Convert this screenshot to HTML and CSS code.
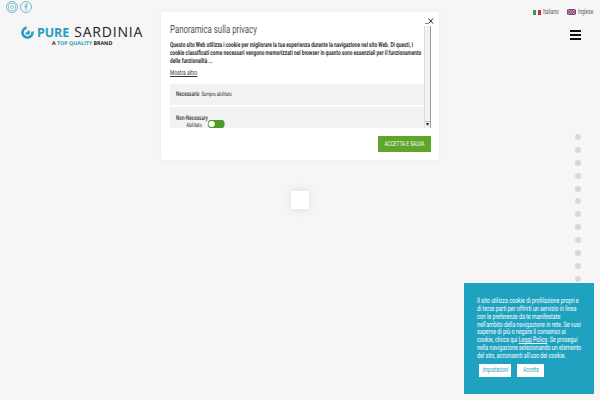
FILE: index.html
```html
<!DOCTYPE html>
<html lang="it">
<head>
  <meta charset="UTF-8">
  <meta name="viewport" content="width=device-width, initial-scale=1.0">
  <title>Pure Sardinia</title>
  <link rel="stylesheet" href="styles.css">
</head>
<body>
  <header class="header">
    <div class="header-left">
      <div class="socials">
        <span class="social">
          <svg width="8" height="8" viewBox="0 0 8 8"><rect x="0.5" y="0.5" width="7" height="7" rx="2" fill="none" stroke="#8fcbd6"/><circle cx="4" cy="4" r="1.5" fill="none" stroke="#8fcbd6"/></svg>
        </span>
        <span class="social">
          <svg width="8" height="8" viewBox="0 0 8 8"><path d="M5.5 0.6H4.6C3.8 0.6 3.4 1.1 3.4 1.9V3H2.5V4.2H3.4V7.6H4.6V4.2H5.5V3H4.6V2.1C4.6 1.9 4.7 1.8 4.9 1.8H5.5Z" fill="#6fbdcb"/></svg>
        </span>
      </div>
      <div class="logo">
        <div class="logo-main">
          <svg class="logo-mark" width="13" height="13" viewBox="0 0 13 13"><path d="M5.6 1.6A5 5 0 1 0 11.4 5.6" fill="none" stroke="#2a9dbd" stroke-width="2.6"/><path d="M6.5 4.2C8 4.2 9 5.1 9 6.4C9 7.8 7.9 8.8 6.5 8.8C5.2 8.8 4.2 7.8 4.2 6.5C6 6.8 7.2 5.8 6.5 4.2Z" fill="#2a9dbd"/></svg>
          <span class="logo-pure">PURE</span>
          <span class="logo-sardinia">SARDINIA</span>
        </div>
        <div class="logo-sub">A <span class="logo-top">TOP QUALITY</span> BRAND</div>
      </div>
    </div>
    <div class="header-right">
      <div class="langs">
        <span class="lang">
          <svg width="8" height="5" viewBox="0 0 8 5"><rect width="3" height="5" fill="#2e9e4f"/><rect x="3" width="2" height="5" fill="#f2f2f2"/><rect x="5" width="3" height="5" fill="#c8303c"/></svg>
          <span class="lang-name">Italiano</span>
        </span>
        <span class="lang">
          <svg width="9" height="6" viewBox="0 0 9 6"><rect width="9" height="6" fill="#3b3f7d"/><path d="M0 0L9 6M9 0L0 6" stroke="#e6c8d2" stroke-width="1"/><path d="M4.5 0V6M0 3H9" stroke="#d9586f" stroke-width="1.6"/></svg>
          <span class="lang-name">Inglese</span>
        </span>
      </div>
      <div class="burger"><span></span><span></span><span></span></div>
    </div>
  </header>

  <div class="dots">
    <span></span><span></span><span></span><span></span><span></span><span></span>
    <span></span><span></span><span></span><span></span><span></span><span></span>
  </div>

  <div class="loader"></div>

  <div class="modal">
    <div class="modal-scroll">
      <div class="modal-clip">
        <div class="modal-body">
          <h2 class="modal-title">Panoramica sulla privacy</h2>
          <p class="modal-text">Questo sito Web utilizza i cookie per migliorare la tua esperienza durante la navigazione nel sito Web. Di questi, i cookie classificati come necessari vengono memorizzati nel browser in quanto sono essenziali per il funzionamento delle funzionalità ...</p>
          <a class="more" href="#">Mostra altro</a>
          <div class="pref">
            <b>Necessario</b> <span>Sempre abilitato</span>
          </div>
          <div class="pref pref-toggle">
            <div class="pref-label">
              <b>Non-Necessary</b>
              <span>Abilitato</span>
            </div>
            <span class="toggle"></span>
          </div>
        </div>
      </div>
      <div class="scrollbar">
        <span class="arrow">▾</span>
      </div>
    </div>
    <svg class="close" width="9" height="9" viewBox="0 0 9 9"><path d="M3.5 1.5L8 6.5M8 1.5L3.5 6.5" stroke="#222" stroke-width="1"/><path d="M0 6.5H3" stroke="#888" stroke-width="1"/></svg>
    <div class="modal-foot">
      <button class="save"><span>ACCETTA E SALVA</span></button>
    </div>
  </div>

  <div class="cookie">
    <p>Il sito utilizza cookie di profilazione propri e di terze parti per offrirti un servizio in linea con le preferenze da te manifestate nell'ambito della navigazione in rete. Se vuoi saperne di più o negare il consenso ai cookie, clicca qui <a href="#">Leggi Policy</a>. Se prosegui nella navigazione selezionando un elemento del sito, acconsenti all'uso dei cookie.</p>
    <div class="cookie-btns">
      <button class="btn-settings"><span>Impostazioni</span></button>
      <button class="btn-accept"><span>Accetta</span></button>
    </div>
  </div>
</body>
</html>
```

FILE: styles.css
```css
* {
  box-sizing: border-box;
}
html, body {
  height: 100%;
}
body {
  margin: 0;
  overflow: hidden;
  background-color: #f6f6f6;
  color: #333;
  font-family: "Roboto", sans-serif;
  text-rendering: geometricPrecision;
}
.header {
  display: flex;
  justify-content: space-between;
  padding: 1px 8px 0 6px;
}
.socials {
  display: flex;
  gap: 2px;
}
.social {
  display: flex;
  align-items: center;
  justify-content: center;
  width: 12px;
  height: 12px;
  border: 1px solid #6fbdcb;
  border-radius: 50%;
}
.logo {
  margin: 12px 0 0 15px;
}
.logo-main {
  display: flex;
  align-items: center;
  gap: 3px;
  height: 14px;
  font-family: "Open Sans", sans-serif;
  font-size: 14px;
  white-space: nowrap;
}
.logo-pure {
  color: #2a9dbd;
  font-size: 12.5px;
  font-weight: 700;
  letter-spacing: -0.1px;
}
.logo-sardinia {
  margin-left: 2px;
  color: #222;
  letter-spacing: 0.8px;
}
.logo-sub {
  margin: 1px 0 0 31px;
  color: #222;
  font-family: "Open Sans", sans-serif;
  font-size: 5.3px;
  font-weight: 700;
  line-height: 7px;
  white-space: nowrap;
}
.logo-top {
  color: #2a9dbd;
}
.header-right {
  display: flex;
  flex-direction: column;
  align-items: flex-end;
}
.langs {
  display: flex;
  gap: 9px;
  margin-top: 6px;
}
.lang {
  display: flex;
  align-items: center;
  gap: 2px;
  color: #555;
  font-size: 7.4px;
  line-height: 10px;
}
.lang-name {
  display: block;
  width: 14.5px;
  transform: scaleX(0.64);
  transform-origin: 0 0;
  white-space: nowrap;
}
.burger {
  display: flex;
  flex-direction: column;
  gap: 2px;
  margin: 13px 11px 0 0;
}
.burger span {
  display: block;
  width: 11px;
  height: 2px;
  background-color: #111;
}
.dots {
  position: absolute;
  top: 134px;
  left: 575px;
  display: flex;
  flex-direction: column;
  gap: 6.9px;
}
.dots span {
  width: 6px;
  height: 6px;
  border-radius: 50%;
  background-color: #d8d8d8;
}
.loader {
  position: absolute;
  top: 191px;
  left: 291px;
  width: 18px;
  height: 18px;
  background-color: #fff;
  box-shadow: 0 0 10px rgba(0, 0, 0, 0.12);
}
.modal {
  position: absolute;
  top: 12px;
  left: 161px;
  width: 278px;
  height: 148px;
  padding: 8px 8px 0 9px;
  background-color: #fff;
  box-shadow: 0 0 4px rgba(0, 0, 0, 0.04);
}
.modal-scroll {
  display: flex;
  height: 108px;
  overflow: hidden;
}
.modal-clip {
  width: 254px;
  overflow: hidden;
}
/* no condensed face installed, so the body text is squeezed */
.modal-body {
  width: 362.9px;
  transform: scaleX(0.7);
  transform-origin: 0 0;
}
.modal-title {
  margin: 5px 0 6px;
  color: #555;
  font-size: 11.2px;
  font-weight: 400;
  line-height: 10px;
}
.modal-text {
  margin: 0 0 3px;
  color: #333;
  font-size: 6.9px;
  font-weight: 700;
  line-height: 8.2px;
}
.more {
  display: block;
  margin-bottom: 7px;
  color: #333;
  font-size: 7.2px;
  line-height: 8px;
}
.pref {
  display: flex;
  align-items: center;
  gap: 3px;
  height: 21px;
  margin-bottom: 2px;
  padding: 0 8.6px;
  background-color: #f2f2f2;
  font-size: 6px;
}
.pref b {
  font-size: 6.6px;
  font-weight: 500;
}
.pref-toggle {
  align-items: flex-start;
  height: 30px;
  margin: 0;
  padding-top: 8px;
  gap: 0;
}
.pref-label {
  display: flex;
  flex-direction: column;
  align-items: center;
  line-height: 7px;
}
.pref-label span {
  margin-left: 6px;
}
.toggle {
  position: relative;
  width: 24px;
  height: 8px;
  margin: 5px 0 0 0;
  border-radius: 4px;
  background-color: #4e9a26;
}
.toggle::before {
  content: "";
  position: absolute;
  top: 1px;
  left: 1px;
  width: 8.5px;
  height: 6px;
  border-radius: 50%;
  background-color: #fff;
}
.scrollbar {
  display: flex;
  flex-direction: column;
  justify-content: flex-end;
  align-items: center;
  width: 7px;
  margin-top: 6px;
  border-left: 1px solid #ddd;
  border-right: 1px solid #999;
  background-color: #f1f1f1;
}
.arrow {
  width: 100%;
  border-top: 1px solid #bbb;
  color: #222;
  font-size: 6px;
  line-height: 6px;
  text-align: center;
}
.close {
  position: absolute;
  top: 5px;
  left: 264px;
}
.modal-foot {
  display: flex;
  justify-content: flex-end;
  margin-top: 8px;
}
.save {
  display: flex;
  justify-content: center;
  align-items: center;
  width: 53px;
  height: 16px;
  padding: 0;
  border: none;
  background-color: #5ea52c;
  color: #fff;
  font-family: inherit;
  font-size: 6.8px;
  white-space: nowrap;
}
.save span {
  flex-shrink: 0;
  transform: scaleX(0.7);
}
.cookie {
  position: absolute;
  top: 283px;
  left: 464px;
  width: 130px;
  height: 111px;
  padding: 14px 0 0 13px;
  background-color: #1fa2bf;
  color: #fff;
}
.cookie p {
  width: 151px;
  margin: 0;
  font-size: 7.6px;
  line-height: 7.85px;
  transform: scaleX(0.7);
  transform-origin: 0 0;
}
.cookie a {
  color: #fff;
}
.cookie-btns {
  display: flex;
  gap: 6px;
  margin: 4px 0 0 2px;
}
.cookie-btns button {
  display: flex;
  justify-content: center;
  align-items: center;
  height: 13px;
  padding: 0;
  border: none;
  background-color: #fff;
  color: #1fa2bf;
  font-family: inherit;
  font-size: 6.4px;
  white-space: nowrap;
}
.cookie-btns span {
  flex-shrink: 0;
  transform: scaleX(0.7);
}
.btn-settings {
  width: 32px;
}
.btn-accept {
  width: 27px;
}
```
